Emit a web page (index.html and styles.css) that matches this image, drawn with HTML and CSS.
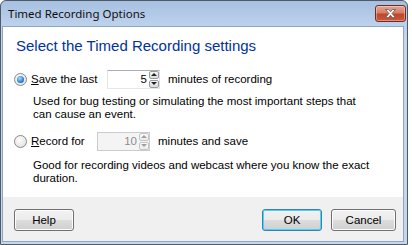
FILE: index.html
```html
<!DOCTYPE html>
<html lang="en">
<head>
  <meta charset="UTF-8">
  <title>Timed Recording Options</title>
  <link rel="stylesheet" href="styles.css">
</head>
<body>
  <div class="window">
    <div class="title-bar">
      <div class="title">Timed Recording Options</div>
      <div class="close-btn">
        <svg width="13" height="9" viewBox="0 0 13 9">
          <path d="M1.5 0.5 L4.5 0.5 L6.5 2.8 L8.5 0.5 L11.5 0.5 L8 4.5 L11.5 8.5 L8.5 8.5 L6.5 6.2 L4.5 8.5 L1.5 8.5 L5 4.5 Z" fill="#fff" stroke="#5a5a5a" stroke-width="0.8"/>
        </svg>
      </div>
    </div>

    <div class="client">
      <div class="content">
        <div class="main-title">Select the Timed Recording settings</div>

        <div class="option-row">
          <span class="radio checked"><span class="dot"></span></span>
          <span class="label label-save"><u>S</u>ave the last</span>
          <div class="spinner">
            <span class="value">5</span>
            <span class="arrows">
              <span class="arrow up"></span>
              <span class="arrow down"></span>
            </span>
          </div>
          <span class="after">minutes of recording</span>
        </div>
        <div class="desc">Used for bug testing or simulating the most important steps that<br>can cause an event.</div>

        <div class="option-row second">
          <span class="radio"></span>
          <span class="label label-record"><u>R</u>ecord for</span>
          <div class="spinner disabled">
            <span class="value">10</span>
            <span class="arrows">
              <span class="arrow up"></span>
              <span class="arrow down"></span>
            </span>
          </div>
          <span class="after">minutes and save</span>
        </div>
        <div class="desc desc-second">Good for recording videos and webcast where you know the exact<br>duration.</div>
      </div>

      <div class="footer">
        <button class="btn btn-help">Help</button>
        <div class="footer-right">
          <button class="btn btn-ok">OK</button>
          <button class="btn btn-cancel">Cancel</button>
        </div>
      </div>
    </div>
  </div>
</body>
</html>
```

FILE: styles.css
```css
* {
  box-sizing: border-box;
}

body {
  margin: 0;
  padding: 0;
  background-color: #fff;
  font-family: 'Liberation Sans', Arial, sans-serif;
  font-size: 11.5px;
  color: #000;
}

.window {
  width: 408px;
  height: 245px;
  border: 1px solid #4f5a66;
  border-radius: 6px 6px 0 0;
  background: linear-gradient(#a7c0e1, #bcd1eb 24px, #c4d7ee 40px, #c4d7ee);
  display: flex;
  flex-direction: column;
}

.title-bar {
  height: 25px;
  display: flex;
  justify-content: space-between;
  align-items: flex-start;
  padding: 0 1px 0 7px;
}

.title {
  font-family: 'Noto Sans', sans-serif;
  font-size: 11.5px;
  color: #101010;
  margin-top: 5px;
}

.close-btn {
  width: 31px;
  height: 17px;
  margin-top: 4px;
  border: 1px solid #6e2d22;
  border-radius: 3px;
  background: linear-gradient(#e6a594, #d67e66 45%, #c2452a 55%, #c9593c);
  box-shadow: inset 0 0 0 1px rgba(255, 255, 255, 0.35);
  display: flex;
  align-items: center;
  justify-content: center;
}

.client {
  flex: 1;
  margin: 0 3px 2px 1px;
  border: 1px solid #8fa6c2;
  background-color: #fff;
  display: flex;
  flex-direction: column;
}

.content {
  flex: 1;
  padding: 10px 8px 0 11px;
}

.main-title {
  font-size: 15px;
  line-height: 18px;
  color: #003399;
  margin-left: 2px;
  margin-bottom: 14px;
}

.option-row {
  display: flex;
  align-items: center;
  height: 20px;
}

.option-row.second {
  margin-top: 10px;
}

.radio {
  width: 13px;
  height: 13px;
  border-radius: 50%;
  border: 1px solid #8a8a8a;
  background: radial-gradient(circle at 40% 35%, #fdfdfd, #dcdcdc);
  display: flex;
  align-items: center;
  justify-content: center;
  margin-right: 4px;
}

.radio .dot {
  width: 7px;
  height: 7px;
  border-radius: 50%;
  background: radial-gradient(circle at 40% 35%, #a8dcff, #2a80d0 60%, #1a4f9c);
}

.label-save {
  width: 76px;
}

.label-record {
  width: 66px;
}

.spinner {
  width: 53px;
  height: 19px;
  border: 1px solid #abadb3;
  border-right-color: #dbdfe6;
  border-bottom-color: #e3e9ef;
  border-left-color: #e2e3ea;
  background-color: #fff;
  display: flex;
  align-items: stretch;
  margin-right: 8px;
}

.spinner .value {
  flex: 1;
  text-align: right;
  padding-right: 2px;
  line-height: 17px;
}

.spinner .arrows {
  width: 10px;
  display: flex;
  flex-direction: column;
  gap: 1px;
}

.arrow {
  flex: 1;
  border: 1px solid #9a9a9a;
  border-radius: 2px;
  background: linear-gradient(#f6f6f6, #dcdcdc);
  display: flex;
  align-items: center;
  justify-content: center;
}

.arrow::after {
  content: '';
  border-left: 3px solid transparent;
  border-right: 3px solid transparent;
}

.arrow.up::after {
  border-bottom: 3px solid #222;
}

.arrow.down::after {
  border-top: 3px solid #222;
}

.spinner.disabled {
  background-color: #f4f4f4;
  border-color: #c8cbcf;
}

.spinner.disabled .value {
  color: #8d8d8d;
}

.spinner.disabled .arrow {
  border-color: #c5c5c5;
  background: linear-gradient(#fafafa, #ececec);
}

.spinner.disabled .arrow.up::after {
  border-bottom-color: #a0a0a0;
}

.spinner.disabled .arrow.down::after {
  border-top-color: #a0a0a0;
}

.desc {
  margin-top: 6px;
  margin-left: 19px;
  line-height: 13px;
}

.desc-second {
  margin-top: 8px;
}

.footer {
  height: 44px;
  background-color: #f0f0f0;
  display: flex;
  justify-content: space-between;
  align-items: flex-start;
  padding: 12px 7px 0 11px;
}

.footer-right {
  display: flex;
  gap: 9px;
}

.btn {
  height: 22px;
  font-family: 'Liberation Sans', Arial, sans-serif;
  font-size: 11.5px;
  color: #000;
  border: 1px solid #707070;
  border-radius: 3px;
  background: linear-gradient(#f2f2f2, #ebebeb 50%, #dddddd 51%, #cfcfcf);
  box-shadow: inset 0 0 0 1px #fcfcfc;
  padding: 0;
}

.btn-help {
  width: 60px;
}

.btn-ok {
  width: 60px;
  border-color: #3c7fb1;
  box-shadow: inset 0 0 0 1px #48d5f7;
}

.btn-cancel {
  width: 65px;
}
```
